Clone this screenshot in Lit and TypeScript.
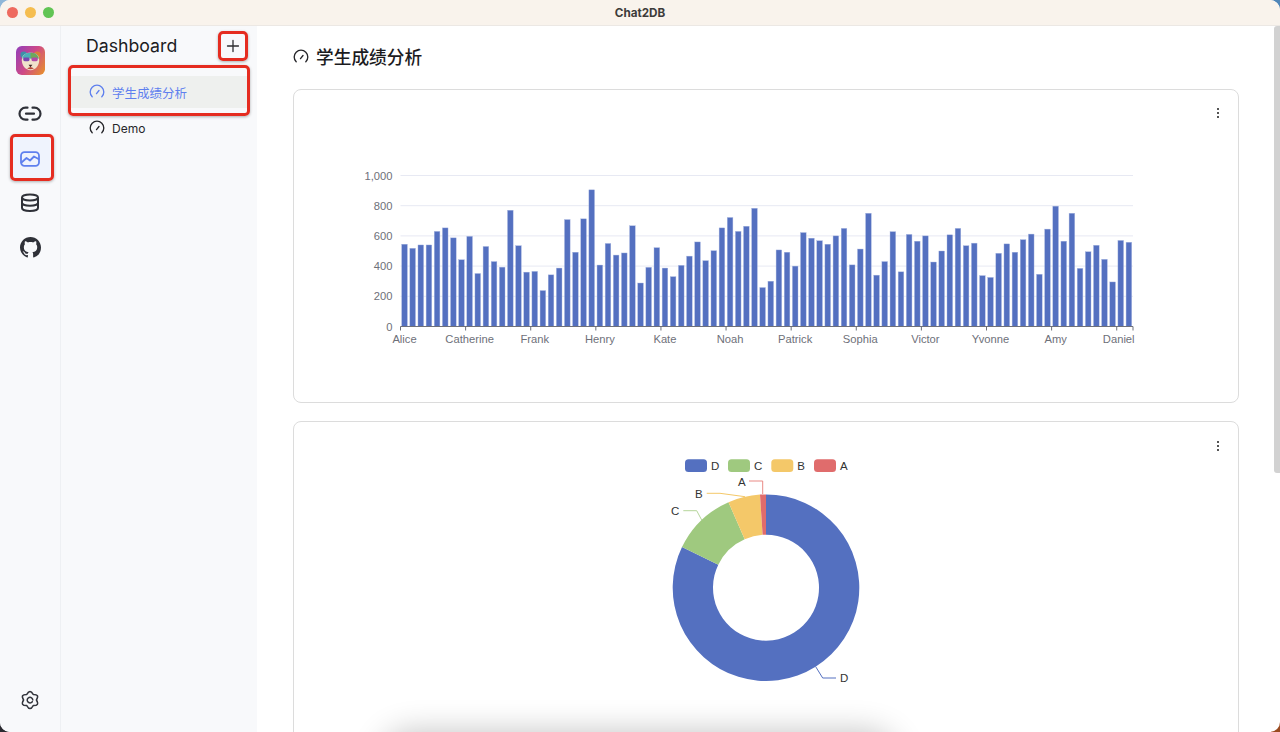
import { LitElement, html, css, svg } from "lit";
import { customElement } from "lit/decorators.js";

const values = [
  545, 518, 540, 540, 630, 653, 587, 442, 597, 351, 530, 430, 393, 770, 535, 360, 365, 238, 342, 387,
  708, 492, 713, 905, 407, 550, 473, 487, 667, 288, 392, 522, 387, 330, 405, 466, 560, 436, 502, 653,
  722, 630, 664, 783, 258, 300, 507, 492, 400, 622, 585, 568, 545, 600, 650, 408, 513, 750, 340, 430,
  628, 362, 610, 565, 600, 427, 500, 607, 650, 535, 552, 337, 325, 485, 547, 492, 575, 612, 346, 645,
  797, 565, 750, 385, 495, 538, 445, 295, 570, 558,
];
const xLabels = ["Alice", "Catherine", "Frank", "Henry", "Kate", "Noah", "Patrick", "Sophia", "Victor", "Yvonne", "Amy", "Daniel"];

// chart area in card coordinates
const AXIS_LEFT = 106.5;
const AXIS_RIGHT = 839;
const AXIS_BOTTOM = 236.5;
const PER_1000 = 151;

const gauge = (color: string) => html`
  <svg width="16" height="16" viewBox="0 0 16 16" fill="none" stroke=${color} stroke-width="1.35" stroke-linecap="round">
    <path d="M3.2 12.8A6.8 6.8 0 1 1 12.8 12.8" />
    <path d="M7.5 9.6 10 6.5" />
  </svg>
`;

const moreDots = html`
  <svg class="more" width="4" height="12" viewBox="0 0 4 12" fill="#555">
    <rect x="1" y="1" width="2" height="2" /><rect x="1" y="5" width="2" height="2" /><rect x="1" y="9" width="2" height="2" />
  </svg>
`;

@customElement("bar-card")
class BarCard extends LitElement {
  static styles = css`
    :host { display: block; position: relative; height: 314px; border: 1px solid #dcdcdc; border-radius: 8px; box-sizing: border-box; background: #fff; }
    svg.plot { display: block; font-family: "Liberation Sans", Arial, sans-serif; font-size: 11.2px; }
    .more { position: absolute; top: 17px; right: 18px; }
  `;

  render() {
    const step = (AXIS_RIGHT - AXIS_LEFT) / values.length;
    return html`
      <svg class="plot" width="944" height="312">
        ${[200, 400, 600, 800, 1000].map((v) => {
          const y = AXIS_BOTTOM - (v * PER_1000) / 1000;
          return svg`<line x1=${AXIS_LEFT} x2=${AXIS_RIGHT} y1=${y} y2=${y} stroke="#e7e9f3" />`;
        })}
        ${[0, 200, 400, 600, 800, 1000].map((v) => {
          const y = AXIS_BOTTOM - (v * PER_1000) / 1000;
          return svg`<text x="98.5" y=${y + 4} text-anchor="end" fill="#6e7079">${v.toLocaleString("en-US")}</text>`;
        })}
        ${values.map((v, i) => {
          const h = (v * PER_1000) / 1000;
          return svg`<rect x=${AXIS_LEFT + i * step + 1.2} y=${AXIS_BOTTOM - h} width=${step - 2.5} height=${h} fill="#5470c0" stroke="#a9b7e0" stroke-width=".4" />`;
        })}
        <line x1=${AXIS_LEFT} x2=${AXIS_RIGHT} y1=${AXIS_BOTTOM} y2=${AXIS_BOTTOM} stroke="#6e7079" />
        ${xLabels.map((name, i) => {
          const tick = AXIS_LEFT + i * 8 * step;
          const center = i === xLabels.length - 1 ? tick + 2 : tick + 4;
          return svg`
            <line x1=${tick} x2=${tick} y1=${AXIS_BOTTOM} y2=${AXIS_BOTTOM + 4} stroke="#6e7079" />
            <text x=${center} y="253" text-anchor="middle" fill="#6e7079">${name}</text>
          `;
        })}
        <line x1=${AXIS_RIGHT} x2=${AXIS_RIGHT} y1=${AXIS_BOTTOM} y2=${AXIS_BOTTOM + 4} stroke="#6e7079" />
      </svg>
      ${moreDots}
    `;
  }
}

const polar = (cx: number, cy: number, r: number, deg: number) => {
  const a = ((deg - 90) * Math.PI) / 180;
  return [cx + r * Math.cos(a), cy + r * Math.sin(a)];
};
const arc = (cx: number, cy: number, r0: number, r1: number, from: number, to: number) => {
  const [ax, ay] = polar(cx, cy, r1, from);
  const [bx, by] = polar(cx, cy, r1, to);
  const [cxx, cyy] = polar(cx, cy, r0, to);
  const [dx, dy] = polar(cx, cy, r0, from);
  const large = to - from > 180 ? 1 : 0;
  return `M${ax} ${ay}A${r1} ${r1} 0 ${large} 1 ${bx} ${by}L${cxx} ${cyy}A${r0} ${r0} 0 ${large} 0 ${dx} ${dy}Z`;
};

const slices = [
  { name: "D", color: "#5470c0", from: 0, to: 295.8 },
  { name: "C", color: "#9fc97f", from: 295.8, to: 336.3 },
  { name: "B", color: "#f4c869", from: 336.3, to: 356.3 },
  { name: "A", color: "#e06c6c", from: 356.3, to: 360 },
];
const legendX = [391, 434, 477.3, 520];

@customElement("pie-card")
class PieCard extends LitElement {
  static styles = css`
    :host { display: block; position: relative; height: 360px; border: 1px solid #dcdcdc; border-radius: 8px; box-sizing: border-box; background: #fff; }
    svg.plot { display: block; font-family: "Liberation Sans", Arial, sans-serif; font-size: 11.5px; }
    .more { position: absolute; top: 18px; right: 18px; }
  `;

  render() {
    const cx = 472;
    const cy = 165.7;
    return html`
      <svg class="plot" width="944" height="358">
        ${slices.map((s, i) => svg`
          <rect x=${legendX[i]} y="37.3" width="22" height="12.6" rx="3.5" fill=${s.color} />
          <text x=${legendX[i] + 26} y="48" fill="#333">${s.name}</text>
        `)}
        ${slices.map((s) => svg`<path d=${arc(cx, cy, 53, 93.3, s.from, s.to)} fill=${s.color} />`)}
        <polyline points="468.7,72 468.7,59 455,59" fill="none" stroke="#e98a85" />
        <polyline points="451,74.7 426,71.3 412.7,71.3" fill="none" stroke="#f4c869" />
        <polyline points="407.7,98 402.7,88.7 389.3,88.7" fill="none" stroke="#b5d59b" />
        <polyline points="521.7,244.7 528.7,256 542,256" fill="none" stroke="#5470c0" />
        <text x="444" y="63.5" fill="#333">A</text>
        <text x="401" y="75.5" fill="#333">B</text>
        <text x="377" y="93" fill="#333">C</text>
        <text x="546" y="259.7" fill="#333">D</text>
      </svg>
      ${moreDots}
    `;
  }
}

@customElement("app-root")
class AppRoot extends LitElement {
  static styles = css`
    :host {
      display: block;
      position: relative;
      width: 1280px;
      height: 732px;
      overflow: hidden;
      font-family: "Inter", "Liberation Sans", "Noto Sans CJK SC", sans-serif;
      background: linear-gradient(90deg, #2a2a30 50%, #9a4a20 50%);
    }
    .topcorners { position: absolute; top: 0; left: 0; right: 0; height: 20px; background: linear-gradient(90deg, #8fb6d8 50%, #4f86b8 50%); }
    .window {
      position: relative;
      height: 100%;
      display: flex;
      flex-direction: column;
      border-radius: 10px;
      overflow: hidden;
      background: #fff;
    }
    .titlebar {
      flex: none;
      height: 25px;
      background: #f9f3ec;
      border-bottom: 1px solid #ece8e4;
      display: flex;
      align-items: center;
      justify-content: center;
      position: relative;
      font-size: 11.7px;
      font-weight: 700;
      color: #3d3b3a;
    }
    .lights { position: absolute; left: 7px; top: 7px; display: flex; gap: 7px; }
    .lights i { width: 11px; height: 11px; border-radius: 50%; }
    .body { flex: 1; display: flex; min-height: 0; }
    .rail {
      flex: none;
      width: 60px;
      background: #f8f9fb;
      border-right: 1px solid #eef0f3;
      display: flex;
      flex-direction: column;
      align-items: center;
      padding-top: 20px;
    }
    .logo { width: 29px; height: 29px; margin-bottom: 17px; }
    .rail-item { width: 40px; height: 44.5px; display: flex; align-items: center; justify-content: center; color: #2f3138; }
    .rail-item.active { background: #eff3fd; color: #5f80ee; border-radius: 4px; }
    .rail-spacer { flex: 1; }
    .settings { margin-bottom: 22px; }
    .side { flex: none; width: 196px; background: #f8f9fb; padding: 0 10px 0 9px; box-sizing: border-box; }
    .side-head { height: 40px; display: flex; align-items: center; justify-content: space-between; padding: 0 4px 0 16px; }
    .side-head h2 { margin: 0; padding-bottom: 2px; font-size: 17.7px; font-weight: 400; color: #1c1c1f; }
    .add { width: 20px; height: 20px; display: flex; }
    .nav { margin-top: 10px; display: flex; flex-direction: column; gap: 4px; }
    .nav-item { height: 32px; display: flex; align-items: center; gap: 7px; padding-left: 19px; font-size: 12.5px; color: #26262a; }
    .nav-item.active { background: #eef0ee; color: #5f80ee; }
    .latin { font-size: 12px; }
    .main { flex: 1; min-width: 0; position: relative; padding: 0 41px 0 36px; }
    .page-title { height: 63px; box-sizing: border-box; padding-bottom: 3px; display: flex; align-items: center; gap: 7px; margin: 0; font-size: 17.7px; font-weight: 500; color: #1b1b1e; }
    .page-title svg { margin-top: 2px; }
    .cards { display: flex; flex-direction: column; gap: 18px; }
    .scrollbar { position: absolute; right: 0; top: 0; width: 6px; height: 447px; background: #d2d2d2; border-radius: 3px 0 0 3px; }
    .mark { position: absolute; box-sizing: border-box; border: 3px solid #e52c20; border-radius: 5px; box-shadow: 0 1px 3px rgba(0, 0, 0, 0.3); pointer-events: none; }
    .mark-plus { left: 218px; top: 31px; width: 30px; height: 30px; }
    .mark-item { left: 68px; top: 65px; width: 182px; height: 51px; }
    .mark-rail { left: 10px; top: 134px; width: 44px; height: 47px; }
    .blob { position: absolute; left: 139px; top: 720px; width: 486px; height: 30px; background: #000; border-radius: 20px; box-shadow: 0 0 32px 14px rgba(0, 0, 0, 0.24); }
  `;

  render() {
    return html`
      <div class="topcorners"></div>
      <div class="window">
        <div class="titlebar">
          <div class="lights">
            <i style="background:#ee6a5f"></i><i style="background:#f5bd4f"></i><i style="background:#61c454"></i>
          </div>
          Chat2DB
        </div>
        <div class="body">
          <div class="rail">
            <svg class="logo" viewBox="0 0 30 30">
              <defs>
                <linearGradient id="lg" x1="0" y1="0.2" x2="1" y2="0.8">
                  <stop offset="0" stop-color="#9a3fb4" />
                  <stop offset="0.5" stop-color="#cf4a86" />
                  <stop offset="1" stop-color="#e58a34" />
                </linearGradient>
              </defs>
              <rect width="30" height="30" rx="6" fill="url(#lg)" />
              <circle cx="8" cy="9" r="3.4" fill="#3f8fa8" />
              <circle cx="22" cy="9" r="3.4" fill="#d9803a" />
              <path d="M6 15c0-6 4-8 9-8s9 2 9 8c0 5-4 10-9 10s-9-5-9-10z" fill="#f0e2cc" />
              <path d="M6.5 13c1-5 5-6 8.5-6s7.5 1 8.5 6z" fill="#4bb0b8" />
              <path d="M15 7c3 0 7 1 8.5 6H15z" fill="#6fa85a" />
              <rect x="7.5" y="12" width="6.5" height="3.8" rx="1.5" fill="#7a45b0" />
              <rect x="16" y="12" width="6.5" height="3.8" rx="1.5" fill="#b04aa8" />
              <path d="M13 19.5h4l-2 2.5z" fill="#40262a" />
              <path d="M11.5 23c2 1.3 5 1.3 7 0l-3.5-1.2z" fill="#b5483a" />
            </svg>
            <div class="rail-item">
              <svg width="24" height="24" viewBox="0 0 24 24" fill="none" stroke="currentColor" stroke-width="2.2" stroke-linecap="round">
                <path d="M9.5 5.7H7.5a6 6 0 0 0 0 12h2" />
                <path d="M14.5 5.7h2a6 6 0 0 1 0 12h-2" />
                <path d="M8 11.7h8" />
              </svg>
            </div>
            <div class="rail-item active">
              <svg width="22" height="22" viewBox="0 0 22 22" fill="none" stroke="currentColor" stroke-width="1.8" stroke-linejoin="round" stroke-linecap="round">
                <rect x="2" y="4.2" width="18" height="13.6" rx="3.5" />
                <path d="M2.5 14.5 7.5 10l3.5 2.5 4-4 4.5 2.5" />
              </svg>
            </div>
            <div class="rail-item">
              <svg width="22" height="22" viewBox="0 0 22 22" fill="none" stroke="currentColor" stroke-width="2">
                <ellipse cx="11" cy="5.5" rx="8" ry="3" />
                <path d="M3 5.5V16c0 1.7 3.6 3 8 3s8-1.3 8-3V5.5" />
                <path d="M3 10.7c0 1.7 3.6 3 8 3s8-1.3 8-3" />
              </svg>
            </div>
            <div class="rail-item">
              <svg width="21" height="21" viewBox="0 0 16 16" fill="currentColor">
                <path d="M8 0C3.58 0 0 3.58 0 8c0 3.54 2.29 6.53 5.47 7.59.4.07.55-.17.55-.38 0-.19-.01-.82-.01-1.49-2.01.37-2.53-.49-2.69-.94-.09-.23-.48-.94-.82-1.13-.28-.15-.68-.52-.01-.53.63-.01 1.08.58 1.23.82.72 1.21 1.87.87 2.33.66.07-.52.28-.87.51-1.07-1.78-.2-3.64-.89-3.64-3.95 0-.87.31-1.59.82-2.15-.08-.2-.36-1.02.08-2.12 0 0 .67-.21 2.2.82.64-.18 1.32-.27 2-.27s1.36.09 2 .27c1.53-1.04 2.2-.82 2.2-.82.44 1.1.16 1.92.08 2.12.51.56.82 1.27.82 2.15 0 3.07-1.87 3.75-3.65 3.95.29.25.54.73.54 1.48 0 1.07-.01 1.93-.01 2.2 0 .21.15.46.55.38A8.01 8.01 0 0 0 16 8c0-4.42-3.58-8-8-8z" />
              </svg>
            </div>
            <div class="rail-spacer"></div>
            <svg class="settings" width="20" height="20" viewBox="0 0 20 20" fill="none" stroke="#33353c" stroke-width="1.5" stroke-linejoin="round">
              <path d="M6.8 4.46Q10-1.5 13.2 4.46Q19.96 4.25 16.4 10Q19.96 15.75 13.2 15.54Q10 21.5 6.8 15.54Q.04 15.75 3.6 10Q.04 4.25 6.8 4.46z" />
              <path d="M12.3 11.7A2.8 2.8 0 1 1 12.8 10" stroke-linecap="round" />
            </svg>
          </div>
          <div class="side">
            <div class="side-head">
              <h2>Dashboard</h2>
              <svg class="add" viewBox="0 0 20 20" stroke="#2c2c30" stroke-width="1.3" stroke-linecap="round">
                <path d="M10 4.5v11M4.5 10h11" />
              </svg>
            </div>
            <div class="nav">
              <div class="nav-item active">${gauge("#5f80ee")}学生成绩分析</div>
              <div class="nav-item">${gauge("#26262a")}<span class="latin">Demo</span></div>
            </div>
          </div>
          <div class="main">
            <h1 class="page-title">${gauge("#26262a")}学生成绩分析</h1>
            <div class="cards">
              <bar-card></bar-card>
              <pie-card></pie-card>
            </div>
            <div class="blob"></div>
            <div class="scrollbar"></div>
          </div>
        </div>
      </div>
      <div class="mark mark-plus"></div>
      <div class="mark mark-item"></div>
      <div class="mark mark-rail"></div>
    `;
  }
}
